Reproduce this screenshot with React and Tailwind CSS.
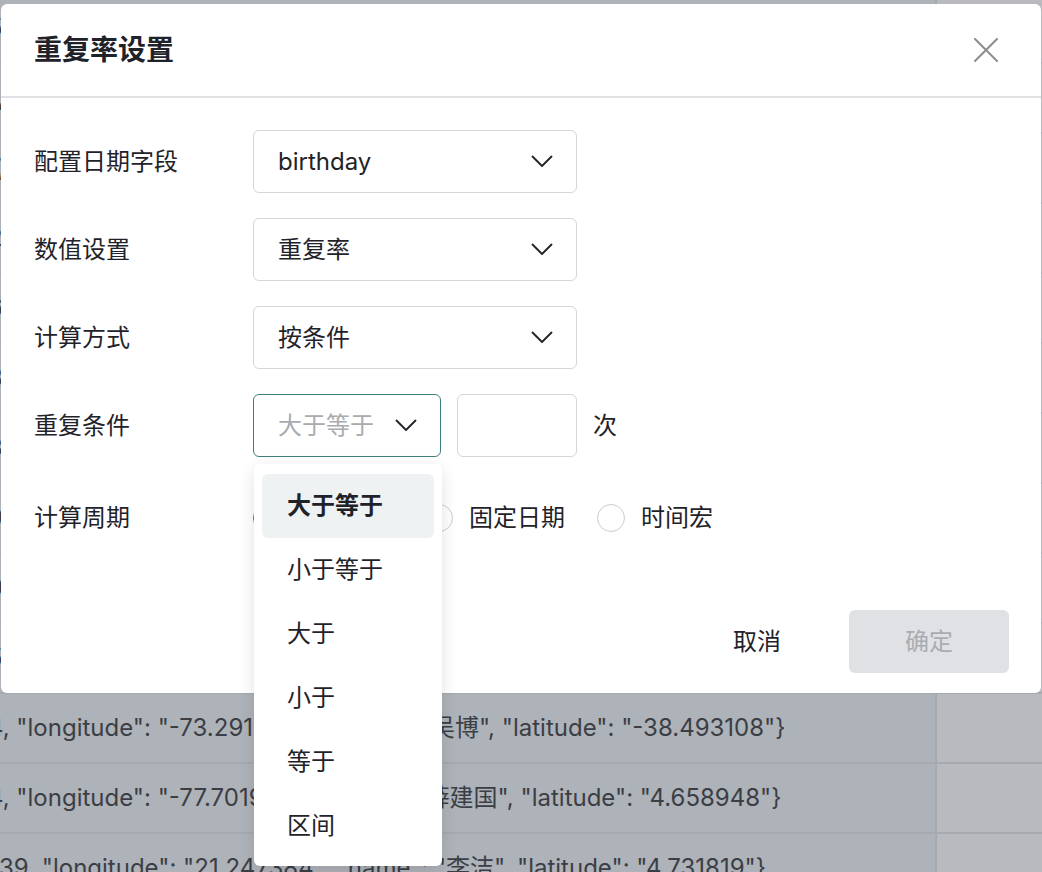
const FONT = "font-['Inter','Noto_Sans_CJK_SC',sans-serif]";

const bgRows = [
  '5, "longitude": "-12.430871", "name": "王芳", "latitude": "21.093341"}',
  '1, "longitude": "44.109283", "name": "张伟", "latitude": "-10.224871"}',
  '7, "longitude": "-3.882019", "name": "刘洋", "latitude": "55.190382"}',
  '2, "longitude": "88.120394", "name": "陈静", "latitude": "-2.019384"}',
  '6, "longitude": "-61.302918", "name": "杨磊", "latitude": "33.847261"}',
  '8, "longitude": "12.998301", "name": "赵敏", "latitude": "7.462819"}',
  '3, "longitude": "-140.22931", "name": "黄勇", "latitude": "-19.837462"}',
  '9, "longitude": "71.847261", "name": "周杰", "latitude": "40.019283"}',
  '0, "longitude": "-9.102938", "name": "孙丽", "latitude": "12.837461"}',
  '5, "longitude": "-51.239481", "name": "马超", "latitude": "-22.73812"}',
  '4, "longitude": "-73.291048", "name": "吴博", "latitude": "-38.493108"}',
  '4, "longitude": "-77.701938", "name": "薛建国", "latitude": "4.658948"}',
  '39, "longitude": "21.247384", "name": "李洁", "latitude": "4.731819"}',
];

const options = ["大于等于", "小于等于", "大于", "小于", "等于", "区间"];

function Chevron() {
  return (
    <svg width="22" height="13" viewBox="0 0 22 13" fill="none">
      <path
        d="M1.5 1.5 L11 11 L20.5 1.5"
        stroke="#1f2329"
        strokeWidth="1.8"
        strokeLinecap="round"
        strokeLinejoin="round"
      />
    </svg>
  );
}

function CloseIcon() {
  return (
    <svg width="24" height="24" viewBox="0 0 24 24" fill="none">
      <path
        d="M1 1 L23 23 M23 1 L1 23"
        stroke="#8c8c8c"
        strokeWidth="2"
        strokeLinecap="round"
      />
    </svg>
  );
}

function Select({ value, width = "w-[324px]", focused, placeholder }) {
  return (
    <div
      className={`${width} h-[63px] flex items-center justify-between pl-[24px] pr-[23px] rounded-[6px] bg-white border-[1.5px] ${
        focused ? "border-[#3e7f7a]" : "border-[#d3d6db]"
      }`}
    >
      <span
        className={`text-[24px] leading-none ${
          placeholder ? "text-[#a8abaf]" : "text-[#1f2329]"
        }`}
      >
        {value}
      </span>
      <Chevron />
    </div>
  );
}

function FormRow({ label, children, className = "" }) {
  return (
    <div className={`flex items-center ${className}`}>
      <div className="w-[219px] text-[24px] text-[#1f2329] leading-none">
        {label}
      </div>
      {children}
    </div>
  );
}

function Radio({ label, checked }) {
  return (
    <label className="flex items-center gap-[16px]">
      <span
        className={`w-[28px] h-[28px] rounded-full border-[1.5px] bg-white flex items-center justify-center ${
          checked ? "border-[#3e7f7a]" : "border-[#c9ccd1]"
        }`}
      >
        {checked && <span className="w-[14px] h-[14px] rounded-full bg-[#3e7f7a]" />}
      </span>
      <span className="text-[24px] text-[#1f2329] leading-none">{label}</span>
    </label>
  );
}

export default function App() {
  return (
    <div
      className={`relative w-[1042px] h-[872px] overflow-hidden bg-[#aeb2b9] ${FONT}`}
    >
      {/* table behind the mask */}
      <div className="-mt-[6px] flex flex-col">
        {bgRows.map((t, i) => (
          <div
            key={i}
            className="flex h-[70px] shrink-0 border-b-[2px] border-[#a5a9b0]"
          >
            <div className="w-[937px] flex items-center overflow-hidden border-r-[2px] border-[#a5a9b0]">
              <span
                className={`whitespace-nowrap text-[24px] text-[#3b3e44] ${
                  i === 12 ? "-ml-[1px]" : "-ml-[12px]"
                }`}
              >
                {t}
              </span>
            </div>
            <div className="flex-1 bg-[#b8babe]" />
          </div>
        ))}
      </div>

      {/* dialog */}
      <div className="absolute left-[1px] top-[4px] w-[1040px] h-[689px] rounded-[6px] bg-white flex flex-col">
        <div className="h-[94px] shrink-0 flex items-center justify-between pl-[33px] pr-[43px] border-b-[2px] border-[#e0e2e6]">
          <h2 className="text-[28px] font-bold text-[#1f2329] leading-none">
            重复率设置
          </h2>
          <CloseIcon />
        </div>

        <div className="flex-1 flex flex-col pl-[33px] pt-[32px] gap-[25px]">
          <FormRow label="配置日期字段">
            <Select value="birthday" />
          </FormRow>
          <FormRow label="数值设置">
            <Select value="重复率" />
          </FormRow>
          <FormRow label="计算方式">
            <Select value="按条件" />
          </FormRow>
          <FormRow label="重复条件">
            <Select value="大于等于" width="w-[188px]" focused placeholder />
            <div className="ml-[16px] w-[120px] h-[63px] rounded-[6px] border-[1.5px] border-[#d3d6db]" />
            <span className="ml-[16px] text-[24px] text-[#1f2329] leading-none">
              次
            </span>
          </FormRow>
          <FormRow label="计算周期" className="mt-[22px]">
            <div className="flex items-center gap-[32px]">
              <Radio label="相对日期" checked />
              <Radio label="固定日期" />
              <Radio label="时间宏" />
            </div>
          </FormRow>
        </div>

        <div className="flex justify-end gap-[12px] pr-[32px] pb-[20px]">
          <button className="w-[160px] h-[63px] text-[24px] text-[#1f2329] rounded-[6px]">
            取消
          </button>
          <button className="w-[160px] h-[63px] text-[24px] text-[#a9acb0] rounded-[6px] bg-[#dfe1e5]">
            确定
          </button>
        </div>
      </div>

      {/* dropdown menu */}
      <div className="absolute left-[254px] top-[464px] w-[188px] h-[402px] rounded-[6px] bg-white shadow-[0_4px_16px_rgba(0,0,0,0.12)] p-[8px] pt-[10px] flex flex-col">
        {options.map((o, i) => (
          <div
            key={o}
            className={`h-[64px] shrink-0 flex items-center pl-[25px] rounded-[6px] text-[24px] leading-none ${
              i === 0
                ? "bg-[#eef2f2] font-bold text-[#1f2329]"
                : "text-[#1f2329]"
            }`}
          >
            {o}
          </div>
        ))}
      </div>
    </div>
  );
}
